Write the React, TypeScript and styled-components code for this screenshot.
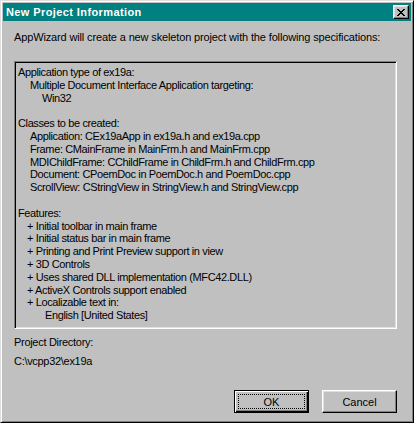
import React from "react";
import styled, { createGlobalStyle } from "styled-components";

const Global = createGlobalStyle`
  html, body { margin: 0; padding: 0; background: #c0c0c0; }
  body { font-family: "Liberation Sans", Arial, sans-serif; font-size: 11px; color: #000; }
  * { box-sizing: border-box; }
`;

const Window = styled.div`
  width: 414px;
  height: 423px;
  background: #c0c0c0;
  border: 1px solid;
  border-color: #dfdfdf #000 #000 #dfdfdf;
  box-shadow: inset 1px 1px #fff, inset -1px -1px #808080;
  padding: 2px;
  display: flex;
  flex-direction: column;
`;

const TitleBar = styled.div`
  height: 18px;
  background: #008080;
  display: flex;
  align-items: center;
  justify-content: space-between;
  padding: 0 2px 0 3px;
  color: #fff;
  font-weight: bold;
  font-size: 11px;
  letter-spacing: 0.4px;
`;

const CloseButton = styled.div`
  width: 16px;
  height: 14px;
  background: #c0c0c0;
  border: 1px solid;
  border-color: #fff #000 #000 #fff;
  box-shadow: inset -1px -1px #808080, inset 1px 1px #dfdfdf;
  display: flex;
  align-items: center;
  justify-content: center;
`;

const Body = styled.div`
  flex: 1;
  display: flex;
  flex-direction: column;
  padding: 10px 14px 7px 11px;
`;

const Intro = styled.div`
  line-height: 13px;
  letter-spacing: -0.14px;
  margin-bottom: 17px;
`;

const Sunken = styled.div`
  width: 383px;
  height: 268px;
  border: 1px solid;
  border-color: #808080 #fff #fff #808080;
  box-shadow: inset 1px 1px #000, inset -1px -1px #dfdfdf;
  padding: 4px 3px 0 3px;
  letter-spacing: -0.38px;
`;

const Line = styled.div<{ $indent: number }>`
  height: 12.8px;
  line-height: 12.8px;
  padding-left: ${(p) => p.$indent}px;
  white-space: nowrap;
`;

const Label = styled.div`
  line-height: 13px;
  margin-top: 7px;
  letter-spacing: -0.3px;
`;

const Path = styled.div`
  line-height: 13px;
  margin-top: 6px;
  letter-spacing: -0.3px;
`;

const ButtonRow = styled.div`
  margin-top: auto;
  display: flex;
  justify-content: flex-end;
  gap: 13px;
`;

const Button = styled.div<{ $default?: boolean }>`
  position: relative;
  width: 75px;
  height: 23px;
  display: flex;
  align-items: center;
  justify-content: center;
  background: #c0c0c0;
  border: 1px solid;
  border-color: ${(p) => (p.$default ? "#000" : "#fff #000 #000 #fff")};
  box-shadow: ${(p) =>
    p.$default
      ? "inset 1px 1px #fff, inset -1px -1px #000, inset -2px -2px #808080"
      : "inset -1px -1px #808080, inset 1px 1px #dfdfdf"};
`;

const Focus = styled.span`
  position: absolute;
  left: 3px;
  top: 3px;
  right: 3px;
  bottom: 3px;
  border: 1px dotted #000;
`;

const lines: [number, string][] = [
  [0, "Application type of ex19a:"],
  [12, "Multiple Document Interface Application targeting:"],
  [24, "Win32"],
  [0, ""],
  [0, "Classes to be created:"],
  [12, "Application: CEx19aApp in ex19a.h and ex19a.cpp"],
  [12, "Frame: CMainFrame in MainFrm.h and MainFrm.cpp"],
  [12, "MDIChildFrame: CChildFrame in ChildFrm.h and ChildFrm.cpp"],
  [12, "Document: CPoemDoc in PoemDoc.h and PoemDoc.cpp"],
  [12, "ScrollView: CStringView in StringView.h and StringView.cpp"],
  [0, ""],
  [0, "Features:"],
  [9, "+ Initial toolbar in main frame"],
  [9, "+ Initial status bar in main frame"],
  [9, "+ Printing and Print Preview support in view"],
  [9, "+ 3D Controls"],
  [9, "+ Uses shared DLL implementation (MFC42.DLL)"],
  [9, "+ ActiveX Controls support enabled"],
  [9, "+ Localizable text in:"],
  [27, "English [United States]"],
];

export default function App() {
  return (
    <>
      <Global />
      <Window>
        <TitleBar>
          <span>New Project Information</span>
          <CloseButton>
            <svg width="8" height="7" viewBox="0 0 8 7" shapeRendering="crispEdges">
              <path
                fill="#000"
                d="M0 0h2v1h-2zM6 0h2v1h-2zM1 1h2v1h-2zM5 1h2v1h-2zM2 2h4v1h-4zM3 3h2v1h-2zM2 4h4v1h-4zM1 5h2v1h-2zM5 5h2v1h-2zM0 6h2v1h-2zM6 6h2v1h-2z"
              />
            </svg>
          </CloseButton>
        </TitleBar>
        <Body>
          <Intro>AppWizard will create a new skeleton project with the following specifications:</Intro>
          <Sunken>
            {lines.map(([indent, text], i) => (
              <Line key={i} $indent={indent}>
                {text}
              </Line>
            ))}
          </Sunken>
          <Label>Project Directory:</Label>
          <Path>C:\vcpp32\ex19a</Path>
          <ButtonRow>
            <Button $default>
              <Focus />
              OK
            </Button>
            <Button>Cancel</Button>
          </ButtonRow>
        </Body>
      </Window>
    </>
  );
}
